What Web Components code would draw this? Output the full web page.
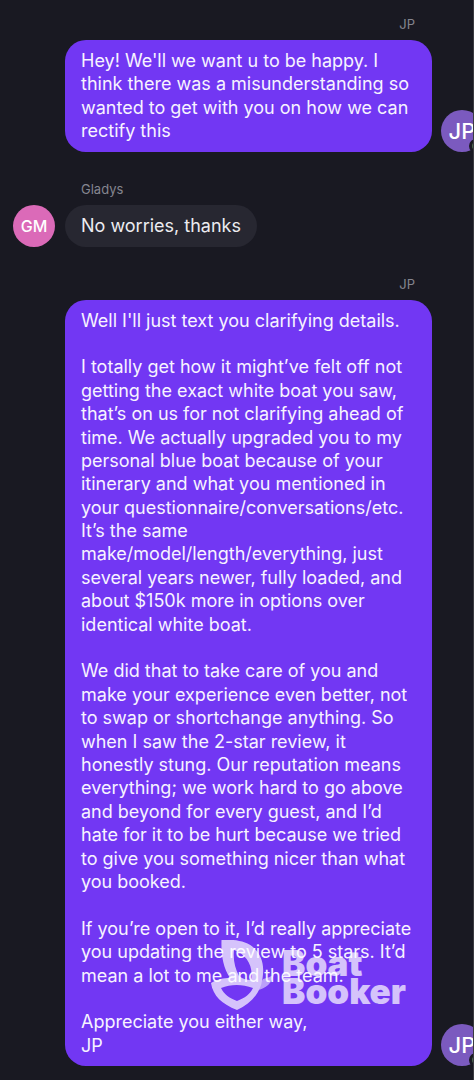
<!DOCTYPE html>
<html lang="en">
<head>
<meta charset="utf-8">
<meta name="viewport" content="width=device-width, initial-scale=1">
<title>Conversation</title>
<style>
  body { margin: 0; background: #191922; font-family: Inter, sans-serif; color: #fff; }
</style>
</head>
<body>
<chat-thread>
  <chat-message own sender="JP"><chat-bubble own>Hey! We'll we want u to be happy. I think there was a misunderstanding so wanted to get with you on how we can rectify this</chat-bubble></chat-message>
  <chat-message sender="Gladys" initials="GM"><chat-bubble>No worries, thanks</chat-bubble></chat-message>
  <chat-message own sender="JP"><chat-bubble own><p>Well I'll just text you clarifying details.</p>
    <p>I totally get how it might’ve felt off not getting the exact white boat you saw, that’s on us for not clarifying ahead of time. We actually upgraded you to my personal blue boat because of your itinerary and what you mentioned in your questionnaire/conversations/etc. It’s the same make/model/length/everything, just several years newer, fully loaded, and about $150k more in options over identical white boat.</p>
    <p>We did that to take care of you and make your experience even better, not to swap or shortchange anything. So when I saw the 2-star review, it honestly stung. Our reputation means everything; we work hard to go above and beyond for every guest, and I’d hate for it to be hurt because we tried to give you something nicer than what you booked.</p>
    <p>If you’re open to it, I’d really appreciate you updating the review to 5 stars. It’d mean a lot to me and the team.</p>
    <p>Appreciate you either way,<br>JP</p><brand-mark slot="overlay"></brand-mark></chat-bubble></chat-message>
</chat-thread>
<script>
const define = (name, html, setup) => {
  const template = document.createElement('template');
  template.innerHTML = html;
  customElements.define(name, class extends HTMLElement {
    constructor() {
      super();
      this.attachShadow({ mode: 'open' }).append(template.content.cloneNode(true));
    }
    connectedCallback() { if (setup) setup(this, this.shadowRoot); }
  });
};

define('chat-thread', `
  <style>
    :host { display: flex; flex-direction: column; gap: 28px; padding: 15px 0 12px 13px;
      box-sizing: border-box; min-height: 100vh; overflow: hidden; border-right: 1px solid #3b3b40; }
  </style>
  <slot></slot>`);

define('user-avatar', `
  <style>
    :host { display: grid; place-items: center; position: relative; flex: none; width: 42px; height: 42px;
      border-radius: 50%; background: #db6ab8; color: #fff; font-size: 16px; font-weight: 500; }
    :host([own]) { background: #7b5abf; font-size: 22px; }
    .status { display: none; }
    :host([own]) .status { display: block; position: absolute; right: 0; bottom: -1px; width: 8px; height: 8px;
      border: 3px solid #191922; border-radius: 50%; background: #4d6b50; }
  </style>
  <slot></slot><span class="status"></span>`);

define('chat-bubble', `
  <style>
    :host { display: block; position: relative; box-sizing: border-box; padding: 9px 16px; border-radius: 21px;
      background: #272731; color: #ececf0; font-size: 18px; line-height: 1.3; }
    :host([own]) { background: #7237f3; color: #f7f3ff; }
    ::slotted(p) { margin: 0 0 1.3em; }
    ::slotted(p:last-of-type) { margin-bottom: 0; }
  </style>
  <slot></slot><slot name="overlay"></slot>`);

define('chat-message', `
  <style>
    :host { display: flex; flex-direction: column; gap: 7px; }
    .name { font-size: 13px; line-height: 18px; color: #85858f; padding: 0 68px; }
    .row { display: flex; align-items: flex-end; gap: 10px; }
    :host([own]) { margin-left: 52px; margin-right: -10px; }
    :host([own]) .name { text-align: right; }
    :host([own]) .row { flex-direction: row-reverse; gap: 9px; }
    :host([own]) ::slotted(chat-bubble) { flex: 1; }
  </style>
  <div class="name"></div>
  <div class="row"><user-avatar></user-avatar><slot></slot></div>`,
  (host, root) => {
    const avatar = root.querySelector('user-avatar');
    root.querySelector('.name').textContent = host.getAttribute('sender');
    avatar.textContent = host.getAttribute('initials') || host.getAttribute('sender');
    avatar.toggleAttribute('own', host.hasAttribute('own'));
  });

define('brand-mark', `
  <style>
    :host { position: absolute; right: 26px; bottom: 55px; display: flex; align-items: center; gap: 8px; color: #fff; opacity: .7; }
    svg { display: block; width: 63px; height: 71px; }
    .word { padding-top: 2px; font: 900 35px/28px Inter, sans-serif; }
  </style>
  <svg viewBox="0 0 63 71" fill="currentColor" aria-hidden="true">
    <path d="M10.500 0C23 -1 36 1 43 8C50 15 53 23 52 34C51 52 41 63 26 70C11 64 2 56 0 43C6 39 13 38 19 38C12 27 10 15 10.500 0ZM23 10C22 20 24 28 28 36C32 39 36 40 40 40C43 26 35 14 23 10ZM10 48C13 54 18 58 26 61C34 58 39 54 42 48C31 44 20 44 10 48Z" fill-rule="evenodd"/>
    <path d="M52 39C57 38 61 36 63 34C61 43 55 49 46 50Z" opacity=".75"/>
  </svg>
  <div class="word">Boat<br>Booker</div>`);
</script>
</body>
</html>
